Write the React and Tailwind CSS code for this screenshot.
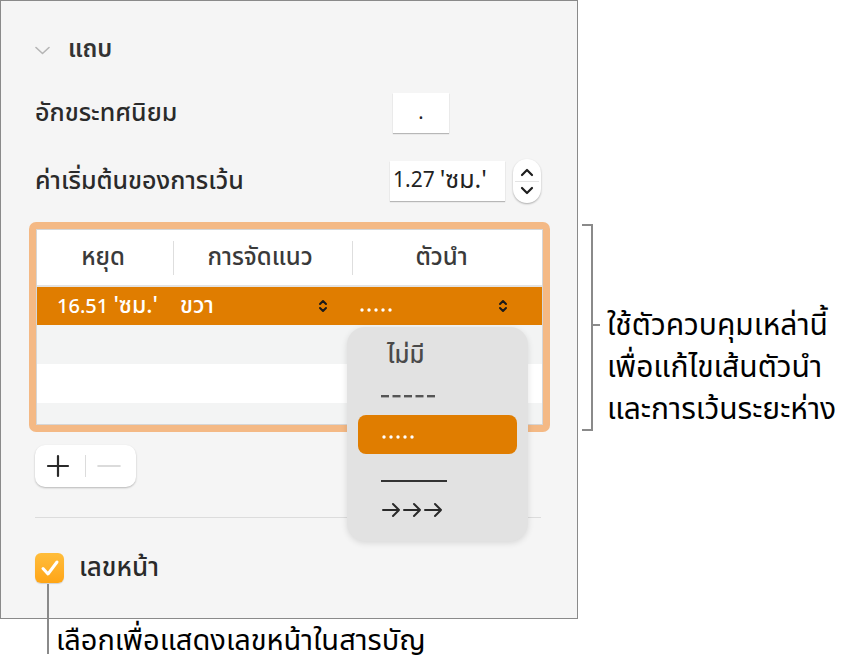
import React from "react";

const FONT = { fontFamily: '"Noto Sans Thai", "Noto Sans Thai UI", "Noto Sans", "DejaVu Sans", sans-serif' };

function UpDown({ color = "#1a1a1a", w = 10, h = 16 }) {
  return (
    <svg width={w} height={h} viewBox="0 0 10 16" fill="none" stroke={color} strokeWidth="2" strokeLinecap="round" strokeLinejoin="round">
      <path d="M2 6 L5 3 L8 6" />
      <path d="M2 10 L5 13 L8 10" />
    </svg>
  );
}

function Dots({ color = "white" }) {
  return (
    <svg width="36" height="6" viewBox="0 0 36 6"><g fill={color}>
      <circle cx="2" cy="3" r="1.7" /><circle cx="9" cy="3" r="1.7" /><circle cx="16" cy="3" r="1.7" /><circle cx="23" cy="3" r="1.7" /><circle cx="30" cy="3" r="1.7" />
    </g></svg>
  );
}

export default function App() {
  return (
    <div className="relative w-[841px] h-[668px] bg-white text-[#2a2a2a]" style={FONT}>
      {/* Panel */}
      <div className="relative w-[578px] h-[619px] border border-[#8a8a8a] bg-[#f5f5f5] pl-[34px] pr-[36px] pt-[29px]">
        {/* Section header */}
        <div className="flex items-center h-[40px]">
          <svg width="15" height="9" viewBox="0 0 15 9" fill="none" stroke="#b5b5b5" strokeWidth="1.6" strokeLinecap="round" strokeLinejoin="round">
            <path d="M1 1.5 L7.5 7.5 L14 1.5" />
          </svg>
          <span className="ml-[18px] text-[24px] font-semibold text-[#333] leading-none">แถบ</span>
        </div>

        {/* Decimal */}
        <div className="mt-[23px] flex items-center justify-between h-[40px]">
          <span className="text-[25px] font-medium text-[#2a2a2a] leading-none">อักขระทศนิยม</span>
          <div className="mr-[92px] w-[56px] h-[40px] bg-white shadow-[0_1px_1px_rgba(0,0,0,0.25)] flex items-center justify-center text-[20px] text-[#222]">.</div>
        </div>

        {/* Default spacing */}
        <div className="mt-[26px] flex items-center justify-between h-[44px]">
          <span className="text-[25px] font-medium text-[#2a2a2a] leading-none">ค่าเริ่มต้นของการเว้น</span>
          <div className="flex items-center">
            <div className="w-[115px] h-[40px] bg-white shadow-[0_1px_1px_rgba(0,0,0,0.25)] flex items-center pl-[3px] text-[21px] text-[#222] whitespace-nowrap">1.27 <span className="ml-[5px] text-[25px]">'ซม.'</span></div>
            <div className="ml-[8px] w-[28px] h-[44px] rounded-[14px] bg-white shadow-[0_1px_2px_rgba(0,0,0,0.3)] flex flex-col items-center justify-center gap-[4px]">
              <svg width="14" height="9" viewBox="0 0 14 9" fill="none" stroke="#1e1e1e" strokeWidth="2.2" strokeLinecap="round" strokeLinejoin="round"><path d="M2 7 L7 2 L12 7" /></svg>
              <div className="w-[24px] h-px bg-[#e4e4e4]" />
              <svg width="14" height="9" viewBox="0 0 14 9" fill="none" stroke="#1e1e1e" strokeWidth="2.2" strokeLinecap="round" strokeLinejoin="round"><path d="M2 2 L7 7 L12 2" /></svg>
            </div>
          </div>
        </div>

        {/* Table with highlight */}
        <div className="mt-[19px] ml-[-6px] w-[521px] h-[210px] rounded-[7px] bg-[#f4b985] p-[7px]">
          <div className="w-full h-full bg-white border border-[#d6d6d6] overflow-hidden flex flex-col">
            <div className="h-[57px] flex items-center border-b-[2px] border-[#e3e3e3] text-[24px] font-medium text-[#3a3a3a] shrink-0 leading-none">
              <div className="w-[136px] text-center pr-[4px]">หยุด</div>
              <div className="w-px h-[34px] bg-[#dedede]" />
              <div className="w-[178px] text-center pr-[6px]">การจัดแนว</div>
              <div className="w-px h-[34px] bg-[#dedede]" />
              <div className="flex-1 text-center pr-[12px]">ตัวนำ</div>
            </div>
            <div className="h-[38px] bg-[#e07d00] flex items-center text-white font-medium shrink-0 leading-none">
              <span className="ml-[20px] w-[123px] whitespace-nowrap text-[20px]">16.51 <span className="text-[23px]">'ซม.'</span></span>
              <span className="w-[138px] text-[23px]">ขวา</span>
              <UpDown />
              <span className="ml-[32px] mt-[8px]"><Dots /></span>
              <span className="ml-[102px]"><UpDown /></span>
            </div>
            <div className="h-[39px] bg-[#f3f4f4] shrink-0" />
            <div className="h-[39px] bg-white shrink-0" />
            <div className="flex-1 bg-[#f3f4f4]" />
          </div>
        </div>

        {/* + - buttons */}
        <div className="mt-[13px] w-[101px] h-[42px] rounded-[10px] bg-white shadow-[0_1px_2px_rgba(0,0,0,0.25)] flex items-center">
          <svg className="ml-[11px]" width="24" height="24" viewBox="0 0 24 24" stroke="#2a2a2a" strokeWidth="2.2" strokeLinecap="round"><path d="M12 2 V22 M2 12 H22" /></svg>
          <div className="ml-[15px] w-px h-[22px] bg-[#dcdcdc]" />
          <svg className="ml-[11px]" width="24" height="4" viewBox="0 0 24 4" stroke="#cfcfcf" strokeWidth="1.6" strokeLinecap="round"><path d="M1 2 H23" /></svg>
        </div>

        {/* Separator */}
        <div className="mt-[30px] h-px w-[506px] bg-[#dcdcdc]" />

        {/* Checkbox */}
        <div className="mt-[35px] flex items-center h-[30px]">
          <div className="w-[29px] h-[30px] rounded-[6px] bg-gradient-to-b from-[#ffbd3a] to-[#ffa514] flex items-center justify-center shadow-[0_1px_1px_rgba(0,0,0,0.15)]">
            <svg width="20" height="18" viewBox="0 0 20 18" fill="none" stroke="white" strokeWidth="3" strokeLinecap="round" strokeLinejoin="round"><path d="M3 9.5 L8 15 L17 3" /></svg>
          </div>
          <span className="ml-[15px] text-[26px] font-medium text-[#2a2a2a] leading-none">เลขหน้า</span>
        </div>

        {/* Popup menu */}
        <div className="absolute left-[346px] top-[326px] w-[181px] h-[214px] rounded-[18px] bg-[#e2e2e2] shadow-[0_2px_6px_rgba(0,0,0,0.12)] flex flex-col">
          <div className="h-[58px] flex items-center pl-[40px] text-[24px] font-medium text-[#4a4a4a] leading-none">ไม่มี</div>
          <div className="h-[30px] pt-[8px] pl-[34px]">
            <svg width="56" height="6" viewBox="0 0 56 6" className="block"><g fill="#555">
              <rect x="0" y="2" width="8" height="2.4" /><rect x="11.5" y="2" width="8" height="2.4" /><rect x="23" y="2" width="8" height="2.4" /><rect x="34.5" y="2" width="8" height="2.4" /><rect x="46" y="2" width="8" height="2.4" />
            </g></svg>
          </div>
          <div className="mx-[11px] h-[39px] rounded-[8px] bg-[#e07d00] flex items-center pl-[24px] pt-[4px]">
            <Dots />
          </div>
          <div className="mt-[25px] pl-[34px]">
            <svg width="66" height="4" viewBox="0 0 66 4" className="block"><g fill="#333"><rect x="0" y="1" width="66" height="2" /></g></svg>
          </div>
          <div className="mt-[19px] pl-[35px]">
            <svg width="62" height="16" viewBox="0 0 62 16" fill="none" stroke="#2a2a2a" strokeWidth="2" strokeLinecap="round" strokeLinejoin="round" className="block">
              <path d="M1 8 H17 M11 2 L17 8 L11 14" />
              <path d="M22 8 H38 M32 2 L38 8 L32 14" />
              <path d="M43 8 H59 M53 2 L59 8 L53 14" />
            </svg>
          </div>
        </div>
      </div>

      {/* Right bracket annotation */}
      <div className="absolute left-[582px] top-[224px] w-[11px] h-[207px] border-t-[2px] border-r-[2px] border-b-[2px] border-[#8a8a8a]" />
      <div className="absolute left-[593px] top-[324px] w-[7px] h-[2px] bg-[#8a8a8a]" />
      <div className="absolute left-[607px] top-[305px] text-[30px] leading-[42px] text-black whitespace-nowrap">
        <div>ใช้ตัวควบคุมเหล่านี้</div>
        <div>เพื่อแก้ไขเส้นตัวนำ</div>
        <div>และการเว้นระยะห่าง</div>
      </div>

      {/* Bottom annotation */}
      <div className="absolute left-[47px] top-[584px] w-[2px] h-[70px] bg-[#8a8a8a]" />
      <div className="absolute left-[56px] top-[620px] text-[29px] leading-[42px] text-black whitespace-nowrap">เลือกเพื่อแสดงเลขหน้าในสารบัญ</div>
    </div>
  );
}
